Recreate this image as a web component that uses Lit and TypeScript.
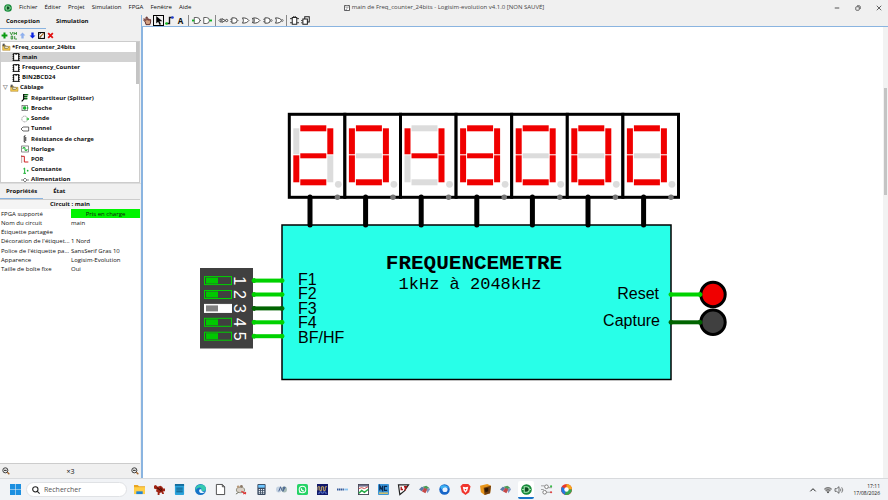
import { LitElement, html, svg, css, nothing } from "lit";
import { customElement, property, state } from "lit/decorators.js";
import { classMap } from "lit/directives/class-map.js";

/* ---------- icons ---------- */

const folder = svg`<path d="M1 3h4l1 2h6v6H1z" fill="#f0c850" stroke="#a57a1c" stroke-width=".7"/><path d="M1 1h3v4H1z" fill="#555"/><path d="M4 5h4l2 1.500L8 8H4z" fill="#fff8d8" stroke="#444" stroke-width=".8"/>`;
const chip = svg`<rect x="2.500" y="1" width="7.500" height="10" fill="#fff" stroke="#000" stroke-width="1.400"/><path d="M.8 2h2M.8 5h2M.8 8h2M.8 11h2M9.700 2h2M9.700 5h2M9.700 8h2M9.700 11h2" stroke="#000" stroke-width="1.400"/><path d="M5 1.700h2.500" stroke="#000" stroke-width="1.300"/>`;
const gateAnd = svg`<path d="M2.500 2.500h3.500a3.500 3.500 0 0 1 0 7H2.500z" fill="#fff" stroke="#222" stroke-width="1.100"/><path d="M0 4.500h2.500M0 7.500h2.500M10 6h1.500" stroke="#444" stroke-width=".8"/>`;
const gateOr = svg`<path d="M2 2.500c4.500 0 6.500 1 8.500 3.500-2 2.500-4 3.500-8.500 3.500 1.500-2.500 1.500-4.500 0-7z" fill="#fff" stroke="#222" stroke-width="1.100"/>`;

const ICONS: Record<string, unknown> = {
  folder,
  chip,
  splitter: svg`<path d="M1 11l3-3V1h6M4 4h5M4 7h5" fill="none" stroke="#000" stroke-width="1.800"/><path d="M5 1h6M5 4h5M5 7h5" stroke="#0a8a1a" stroke-width="1.600"/>`,
  pin: svg`<rect x="1.500" y="2" width="8" height="8" fill="#fff" stroke="#555"/><rect x="3" y="3.500" width="5" height="5" rx="2" fill="#18b030"/><path d="M9 6h2" stroke="#18b030" stroke-width="2"/>`,
  probe: svg`<circle cx="5.500" cy="6" r="4.300" fill="#fff" stroke="#777" stroke-dasharray="2 .8"/><path d="M8 6h4M9.500 4l2 2-2 2" fill="none" stroke="#20c030" stroke-width="1.400"/>`,
  tunnel: svg`<path d="M0 6l3-3h8.500v6H3z" fill="#fff" stroke="#444" stroke-width="1.200"/>`,
  resistor: svg`<path d="M6 0v2l-2 1 4 1.500-4 1.500 4 1.500-4 1.500L6 10v2" fill="none" stroke="#222" stroke-width="1.200"/>`,
  clock: svg`<rect x="1" y="1.500" width="10" height="9" fill="#fff" stroke="#555"/><path d="M3 6V4h3v4h3V6" fill="none" stroke="#18b030" stroke-width="1.500"/>`,
  por: svg`<path d="M0 2h5v8.500h6" fill="none" stroke="#d02020" stroke-width="1.500"/><path d="M1 0v12" stroke="#966" stroke-width=".9"/>`,
  constant: svg`<path d="M3.500 4.500l2-1.500V11M3.500 11h4" fill="none" stroke="#18b030" stroke-width="1.500"/><circle cx="10" cy="7" r="1.300" fill="#18b030"/>`,
  power: svg`<path d="M0 6h3M6 3l3 3-3 3-3-3zM9 6h3" fill="none" stroke="#444"/>`,
  plus: svg`<path d="M6 1v10M1 6h10" stroke="#0a9a10" stroke-width="3.500"/>`,
  vhdl: svg`<path d="M0 0l2.500 5L5 0M7 0v5M11 0v5M7 2.500h4" fill="none" stroke="#2a8a2a" stroke-width="1.500"/><path d="M2 7v5h2.500V7H2M8 7v5h4" fill="none" stroke="#2a8a2a" stroke-width="1.500"/>`,
  up: svg`<path d="M6 1l5 5H8v5H4V6H1z" fill="#8fb0ee"/>`,
  down: svg`<path d="M6 11L1 6h3V1h4v5h3z" fill="#0a22e0"/>`,
  edit: svg`<rect x="1" y="1" width="10" height="10" fill="#fff" stroke="#000" stroke-width="1.800"/><path d="M3 9l7-7" stroke="#a5702a" stroke-width="2"/><path d="M2 4l3-2M3 10l2-2" stroke="#000" stroke-width="1.200"/>`,
  cross: svg`<path d="M2 2l8 8M10 2l-8 8" stroke="#e01010" stroke-width="3"/>`,
  poke: svg`<path d="M4 11.500L3 8 1 5.500l1.500-.8L4 6V1.500h1.700V5h4.500v3l-1 3.500z" fill="#d4a080" stroke="#522" stroke-width="1.200"/><path d="M7.500 3v3M9.500 4v3M0 4h3" stroke="#733"/>`,
  arrow: svg`<path d="M3 0v10l2.500-2.500L7.500 12l1.800-1-2-4h4z" fill="#000"/>`,
  wire: svg`<path d="M2 10h4V2h4" fill="none" stroke="#111" stroke-width="1.800"/><circle cx="2" cy="10" r="1.800" fill="#10c020"/><circle cx="10" cy="2" r="1.800" fill="#2040d0"/>`,
  inPin: svg`<path d="M3 2h3.500a4 4 0 0 1 0 8H3z" fill="#fff" stroke="#333"/><path d="M0 6h3" stroke="#10b020" stroke-width="2.500"/><path d="M10.500 6H12" stroke="#333"/>`,
  outPin: svg`<path d="M1 2h3.500a4 4 0 0 1 0 8H1z" fill="#fff" stroke="#333"/><path d="M8.500 6H12" stroke="#10b020" stroke-width="2.500"/>`,
  notGate: svg`<path d="M0 6l2.500-2.500v5zM4 3.500L8.500 6 4 8.500z" fill="#fff" stroke="#222"/><circle cx="10.200" cy="6" r="1.500" fill="#fff" stroke="#222"/>`,
  andGate: gateAnd,
  orGate: gateOr,
  xorGate: svg`${gateOr}<path d="M.3 2.500c1.500 2.500 1.500 4.500 0 7" fill="none" stroke="#222"/>`,
  nandGate: svg`${gateAnd}<circle cx="11" cy="6" r="1.200" fill="#fff" stroke="#222" stroke-width=".8"/>`,
  norGate: svg`${gateOr}<circle cx="11" cy="6" r="1.200" fill="#fff" stroke="#222" stroke-width=".8"/>`,
  ff: svg`<rect x="3" y="2" width="6" height="9" fill="#fff" stroke="#222" stroke-width="1.300"/><path d="M0 3.500h3M0 9h3M9 3.500h3M9 9h3M5 0v2M7 0v2" stroke="#222" stroke-width="1.200"/>`,
  reg: svg`<rect x="5" y="1" width="6" height="7" fill="#fff" stroke="#222" stroke-width="1.400"/><rect x="2.500" y="4" width="6" height="7" fill="#fff" stroke="#222" stroke-width="1.400"/><path d="M0 6h2M0 9h2" stroke="#222"/>`,
  app: svg`<circle cx="6" cy="6" r="5.800" fill="#178a3a"/><path d="M3.500 3H6a3 3 0 0 1 0 6H3.500z" fill="#0c4d22" stroke="#a8ecb4" stroke-width="1.100"/><path d="M1 6h2.500M9 6h2" stroke="#a8ecb4"/>`,
  floppy: svg`<path d="M1 1h10v10H1z" fill="#fff" stroke="#333" stroke-width="1.500"/><path d="M4 1h4v5H4z" fill="#fff" stroke="#555"/><path d="M3 9h3v2H3z" fill="#556"/>`,
  lens: svg`<circle cx="5" cy="5" r="3.800" fill="#eee" stroke="#333" stroke-width="1.400"/><path d="M3 5h4" stroke="#222" stroke-width="1.500"/><path d="M8 8l3 3" stroke="#a0622a" stroke-width="2"/>`,
  search: svg`<circle cx="5" cy="5" r="4" fill="none" stroke="#222" stroke-width="1.600"/><path d="M8 8l3.500 3.500" stroke="#222" stroke-width="1.600"/>`,
  min: svg`<path d="M1.500 6h9" stroke="#222" stroke-width="1.500"/>`,
  restore: svg`<rect x="1.500" y="3.500" width="7" height="7" rx="1.500" fill="none" stroke="#222" stroke-width="1.300"/><path d="M4 1.500h4.500a2 2 0 0 1 2 2V8" fill="none" stroke="#222" stroke-width="1.300"/>`,
  close: svg`<path d="M1.500 1.500l9 9M10.500 1.500l-9 9" stroke="#222" stroke-width="1.400"/>`,
  caret: svg`<path d="M2 8l4-4 4 4" fill="none" stroke="#222" stroke-width="1.500"/>`,
  wifi: svg`<path d="M0 4.500a8.500 8.500 0 0 1 12 0L6 11z" fill="#aaa"/><path d="M.5 4.500a8 8 0 0 1 11 0M2.500 7a5 5 0 0 1 7 0" fill="none" stroke="#555"/><circle cx="6" cy="9.500" r="1.200" fill="#333"/>`,
  sound: svg`<path d="M0 4h2.500L6 1v10L2.500 8H0z" fill="none" stroke="#333"/><path d="M8 4a3 3 0 0 1 0 4M10 2a6 6 0 0 1 0 8" fill="none" stroke="#444"/>`,
  windows: svg`<path d="M0 0h5.700v5.700H0zM6.300 0H12v5.700H6.300zM0 6.300h5.700V12H0zM6.300 6.300H12V12H6.300z" fill="#1c8fe0"/>`,
  explorer: svg`<path d="M0 1h4l1.500 1.500H12V6H0z" fill="#e9a522"/><path d="M0 3.500h12V11H0z" fill="#ffcf48"/><path d="M2.500 8h7v3h-7z" fill="#2083d5"/>`,
  beast: svg`<path d="M0 2l2-1 2 2 3-1 2 1 1 2h2v3l-2 0 1 3-2 0-1-2-2 1 0 2H4L4 9 2 8l1-2-3-1z" fill="#a02414"/><path d="M3 4l3 2 2 2M7 4l2 3" stroke="#4a0d05" fill="none" stroke-width="1.100"/>`,
  notepad: svg`<rect x="1" y="0" width="10" height="12" rx="1" fill="#2ba3dc"/><path d="M1 0h10v2H1z" fill="#146c9c"/><path d="M2.500 4.500h7M2.500 6.500h7M2.500 8.500h7" stroke="#10587e" stroke-width="1"/>`,
  edge: svg`<circle cx="6" cy="6" r="6" fill="#1673c8"/><path d="M.5 5C2-1 11-1 12 5c0 3-3 3.500-5 2.500 1-2-1-4-3-3.500C2 4.500 1 6 .5 8z" fill="#35c9b0"/><path d="M4.500 7.500c0-2 2-2 2.500-1.500-.5 2 2 3 4 2.500-2 2-6 2-6.500-1z" fill="#e9f7ff"/>`,
  doc: svg`<path d="M1.500.5H8L10.500 3v8.500h-9z" fill="#fff" stroke="#444"/><path d="M8 .5V3h2.500" fill="none" stroke="#444"/>`,
  mouse: svg`<ellipse cx="6" cy="6.500" rx="4.500" ry="3" fill="#d8d0c6" stroke="#776" stroke-width=".8"/><circle cx="3.500" cy="3" r="1.500" fill="#b89a7c"/><circle cx="7" cy="2.500" r="1.500" fill="#8d7a68"/><path d="M7 8l5 3M9 11l3-2" stroke="#d33" stroke-width="1.200"/><path d="M1 11l3-2" stroke="#665"/>`,
  calc: svg`<rect x="1.500" y="0" width="9" height="12" rx="1" fill="#3a4a60"/><rect x="2.500" y="1" width="7" height="3" fill="#6ec6ff"/><path d="M3 6h6M3 8h6M3 10h6" stroke="#e4ebf2" stroke-width="1.200" stroke-dasharray="1.400 .9"/>`,
  lenses: svg`<ellipse cx="3" cy="6" rx="3" ry="3.200" fill="#c4d2e2"/><ellipse cx="9" cy="6" rx="3" ry="3.200" fill="#a8bcb8"/><path d="M3 8l2-5 2 5M8 8V3.500h2L9 6" stroke="#3a5688" fill="none"/>`,
  whatsapp: svg`<rect width="12" height="12" rx="2" fill="#25d366"/><circle cx="6" cy="6" r="3.600" fill="none" stroke="#fff" stroke-width="1.100"/><path d="M2.300 9.700l.8-2.200L4.600 9z" fill="#fff"/><path d="M4.700 4.500c0 2 1 3 2.800 3" stroke="#fff" stroke-width="1.300" fill="none"/>`,
  scope: svg`<rect width="12" height="12" fill="#10186a"/><path d="M1 7V3h2v4h2V3h2v4h2V3h2" stroke="#cfae60" fill="none"/><path d="M1 10h2V8.500h2V10h2V8.500h2V10h2" stroke="#5c7ad0" fill="none"/>`,
  label: svg`<path d="M0 6h8" stroke="#345a9a" stroke-width="2" stroke-dasharray="1.500 .5"/><path d="M8 6h4" stroke="#8ac4f0" stroke-width="2"/>`,
  graph: svg`<rect x=".5" y=".5" width="11" height="11" fill="#fff" stroke="#445"/><path d="M1 2h10" stroke="#557" stroke-width="1.500"/><path d="M1 5l3-1 3 1 4-2" stroke="#c44" fill="none"/><path d="M1 10l3-3 3 2 4-3" stroke="#2a4" stroke-width="1.600" fill="none"/>`,
  nc: svg`<rect width="12" height="12" rx="1" fill="#3a94d8"/><path d="M2 7V2l3 5V2M10 2.500H7V7h3" stroke="#0a2a50" stroke-width="1.300" fill="none"/><path d="M1 10h10" stroke="#e8c860" stroke-width="1.500"/>`,
  lt: svg`<path d="M.5 1h11L7 7.500 2 11.500z" fill="#fff" stroke="#222" stroke-width="1.300"/><path d="M3.500 3v3h2M6.500 3h3.500M8 3v4" stroke="#b01818" stroke-width="1.500" fill="none"/>`,
  cubes: svg`<path d="M0 6l3-3 3 1-3 4z" fill="#5a78a8"/><path d="M4 3l4-1 3 2-3 2z" fill="#4a9a58"/><path d="M8 6l3-2 1 2-3 4z" fill="#8098c0"/><path d="M3 8l3-4 3 2-2 4z" fill="#c44848"/>`,
  thunderbird: svg`<circle cx="6" cy="6" r="5.700" fill="#1765c8"/><circle cx="6.500" cy="6" r="2.800" fill="#e8f2ff"/><path d="M1 3c3-3 9-2 10 2C8 3 5 3 3 6z" fill="#3fb4f4"/>`,
  brave: svg`<path d="M3 0h6l2.500 2.500L10 9l-4 3-4-3L.5 2.500z" fill="#f0342c"/><path d="M3 3l3 .5L9 3 8 7 6 9.500 4 7z" fill="#fff"/><path d="M5 5.500h2L6 7.500z" fill="#f0342c"/>`,
  cube: svg`<path d="M0 2l8-2 4 2-1 8-6 2-4-3z" fill="#e8961c"/><path d="M4 4l8-2-1 8-6 2z" fill="#6e3d10"/><path d="M5 5l4-1v4L6 9z" fill="#2e1804"/>`,
  circuit: svg`<path d="M0 2h4M0 6h3M8 4h4M5 9h6" stroke="#999"/><rect x="4" y="1" width="4" height="4" rx="2" fill="#fff" stroke="#777"/><rect x="2" y="7" width="4" height="4" rx="2" fill="#fff" stroke="#777"/><circle cx="11" cy="2.500" r="1.200" fill="#3b4"/><circle cx="11" cy="9" r="1.200" fill="#d44"/>`,
  photo: svg`<circle cx="6" cy="6" r="6" fill="#e8382c"/><path d="M6 0a6 6 0 0 1 6 6L6 6z" fill="#f6a81c"/><path d="M12 6a6 6 0 0 1-8 5.600L6 6z" fill="#32a852"/><path d="M4 11.600A6 6 0 0 1 1 3l5 3z" fill="#1f7be0"/><circle cx="6" cy="6" r="2.400" fill="#fff"/>`,
};

@customElement("ui-icon")
export class UiIcon extends LitElement {
  @property() name = "";
  static styles = css`
    :host { display: inline-flex; flex: none; width: 8px; height: 8px; }
    svg { width: 100%; height: 100%; overflow: visible; }
  `;
  render() {
    return html`<svg viewBox="0 0 12 12" aria-hidden="true">${ICONS[this.name] ?? nothing}</svg>`;
  }
}

/* ---------- circuit drawing ---------- */

/* segments lit for each digit, order: top, upper right, lower right, bottom, lower left, upper left, middle */
const LIT: Record<string, string> = { "2": "1101101", "0": "1111110", "4": "0110011", "8": "1111111" };
const SEGMENTS = [
  [11, 11, 26, 6],
  [38, 14, 6, 26],
  [38, 41, 6, 27],
  [11, 65, 26, 6],
  [4, 41, 6, 27],
  [4, 14, 6, 26],
  [11, 39, 26, 5],
];

@customElement("circuit-canvas")
export class CircuitCanvas extends LitElement {
  static styles = css`
    :host { display: block; flex: 1; min-width: 0; background: #fff; overflow: hidden; }
    svg { display: block; width: 100%; height: 100%; }
    .sans { font: 16px "Liberation Sans", Arial, sans-serif; fill: #000; }
    .dip { font: 16px "Liberation Sans", Arial, sans-serif; fill: #fff; }
    .end { text-anchor: end; }
    .mid { text-anchor: middle; }
    .title { font: bold 21px "Liberation Mono", "Courier New", monospace; }
    .sub { font: 17px "Liberation Mono", "Courier New", monospace; }
    .frame { fill: #fff; stroke: #000; stroke-width: 3; }
    .on { fill: #f00000; }
    .off { fill: #dcdcdc; }
    .pin { fill: #777; }
    .bus { stroke: #000; stroke-width: 5; stroke-linecap: round; }
    .block { fill: #28ffe8; stroke: #000; stroke-width: 1.5; }
    .hi { stroke: #00d200; fill: #00d200; }
    .lo { stroke: #006400; fill: #006400; }
    .wire { stroke-width: 4; }
    .body { fill: #404040; }
    .sw { fill: #404040; stroke: #00d200; }
    .knob { fill: #00c800; }
    .swoff { fill: #fff; stroke: #fff; }
    .knoboff { fill: #808080; }
    .btn { stroke: #000; stroke-width: 3; }
  `;

  private digit(d: string, i: number) {
    const x = 146.3 + i * 55.6;
    return svg`<g transform="translate(${x} 87.3)">
      <rect class="frame" width="55.6" height="83"></rect>
      ${SEGMENTS.map(([sx, sy, w, h], n) => svg`<rect class=${LIT[d][n] === "1" ? "on" : "off"} x=${sx} y=${sy} width=${w} height=${h}></rect>`)}
      <circle class="off" cx="49" cy="70" r="3.4"></circle>
    </g>`;
  }

  private wire(x1: number, x2: number, y: number, high: boolean) {
    return svg`<g class=${high ? "hi" : "lo"}><path class="wire" d="M${x1} ${y}H${x2}"></path>
      <circle cx=${x1} cy=${y} r="2"></circle><circle cx=${x2} cy=${y} r="2"></circle></g>`;
  }

  render() {
    const digits = [..."2048000"];
    const names = ["F1", "F2", "F3", "F4", "BF/HF"];
    const baselines = [258, 272, 287, 301, 316];
    return html`<svg role="img" aria-label="Circuit main">
      ${digits.map((d, i) => this.digit(d, i))}
      <rect class="block" x="139" y="198" width="389" height="154.500"></rect>
      ${digits.map((_, i) => svg`<circle class="pin" cx=${194.4 + i * 55.6} cy="170.300" r="2.700"></circle>
        <path class="bus" d="M${167 + i * 55.6} 170V198"></path>`)}
      <text class="title mid" x="331" y="242">FREQUENCEMETRE</text>
      <text class="sub mid" x="327" y="262">1kHz à 2048kHz</text>
      <rect class="body" x="57" y="241" width="53" height="80.500"></rect>
      ${names.map((n, i) => {
        const y = 253.6 + i * 13.9;
        const on = i !== 2;
        return svg`<rect class=${on ? "sw" : "swoff"} x="61.500" y=${y - 4} width="27" height="8"></rect>
          <rect class=${on ? "knob" : "knoboff"} x="63" y=${y - 3} width="12" height="6"></rect>
          <text class="dip mid" transform="translate(91 ${y}) rotate(90)">${i + 1}</text>
          ${this.wire(111, 139, y, on)}
          <text class="sans" x="155" y=${baselines[i]}>${n}</text>`;
      })}
      <text class="sans end" x="516" y="272">Reset</text>
      <text class="sans end" x="517" y="299">Capture</text>
      <circle class="btn" cx="570" cy="267.500" r="12.200" fill="#f00000"></circle>
      <circle class="btn" cx="570" cy="295.300" r="12.200" fill="#404040"></circle>
      ${this.wire(528, 557, 267.5, true)}
      ${this.wire(528, 557, 295.3, false)}
    </svg>`;
  }
}

/* ---------- application ---------- */

const MENUS = ["Fichier", "Éditer", "Projet", "Simulation", "FPGA", "Fenêtre", "Aide"];
const TREE: [number, string, string][] = [
  [0, "folder", "*Freq_counter_24bits"],
  [1, "chip", "main"],
  [1, "chip", "Frequency_Counter"],
  [1, "chip", "BIN2BCD24"],
  [1, "folder", "Câblage"],
  [2, "splitter", "Répartiteur (Splitter)"],
  [2, "pin", "Broche"],
  [2, "probe", "Sonde"],
  [2, "tunnel", "Tunnel"],
  [2, "resistor", "Résistance de charge"],
  [2, "clock", "Horloge"],
  [2, "por", "POR"],
  [2, "constant", "Constante"],
  [2, "power", "Alimentation"],
];
const PROPS = [
  ["FPGA supporté", "Pris en charge"],
  ["Nom du circuit", "main"],
  ["Étiquette partagée", ""],
  ["Décoration de l'étiquet...", "1 Nord"],
  ["Police de l'étiquette pa...", "SansSerif Gras 10"],
  ["Apparence", "Logisim-Evolution"],
  ["Taille de boîte fixe", "Oui"],
];
const TOOLS = [
  ["poke", "arrow", "wire", "A"],
  ["inPin", "outPin"],
  ["notGate", "andGate", "orGate", "xorGate", "nandGate", "norGate"],
  ["ff", "reg"],
];
const TASKS = ["explorer", "beast", "notepad", "edge", "doc", "mouse", "calc", "lenses", "whatsapp", "scope", "label", "graph", "nc", "lt", "cubes", "thunderbird", "brave", "cube", "cubes", "app", "circuit", "photo"];

@customElement("app-root")
export class AppRoot extends LitElement {
  @state() private selected = 1;

  static styles = css`
    :host { display: flex; flex-direction: column; height: 100vh; overflow: hidden; background: #f0f0f0; color: #111; font: 6px/9px "Open Sans", "Noto Sans", sans-serif; }
    * { box-sizing: border-box; }
    button { font: inherit; color: inherit; background: none; border: 0; padding: 0; margin: 0; display: flex; align-items: center; justify-content: center; }
    .bar { display: grid; grid-template-columns: 1fr auto 1fr; align-items: center; height: 15px; flex: none; }
    .menus { display: flex; align-items: center; gap: 7px; padding-left: 4px; }
    .title { display: flex; align-items: center; gap: 2px; color: #444; }
    .title ui-icon { width: 6px; height: 6px; }
    .win { display: flex; justify-content: flex-end; gap: 15px; padding-right: 6px; }
    .win ui-icon { width: 6px; height: 6px; }
    .main { display: flex; flex: 1; min-height: 0; }
    .side { width: 142px; flex: none; display: flex; flex-direction: column; border-right: 1px solid #8ab4e0; }
    .tabs { display: flex; flex: none; height: 14px; }
    .tabs.low { height: 16px; padding-top: 1px; border-top: 1px solid #ddd; }
    .tab { padding: 0 6px; font-weight: bold; border-bottom: 1px solid transparent; }
    .tab + .tab { margin-left: 4px; }
    .tab.sel { border-color: #8ab4e0; }
    .edit { display: flex; align-items: center; justify-content: space-between; width: 55px; height: 12px; flex: none; }
    .edit button { width: 8px; height: 10px; }
    .edit ui-icon { width: 7px; height: 7px; }
    .treebox { display: flex; height: 142px; flex: none; align-items: flex-start; background: #fff; border: 1px solid #ccc; margin-right: 1px; overflow: hidden; }
    .tree { flex: 1; display: grid; grid-auto-rows: 1fr; height: 143px; list-style: none; margin: 0; padding: 0; }
    .row { display: flex; align-items: center; gap: 2px; height: 100%; font-weight: bold; width: 100%; justify-content: flex-start; }
    .row.sel { background: #d2d2d2; }
    .lv0 { padding-left: 1px; }
    .lv1 { padding-left: 11px; }
    .lv2 { padding-left: 20px; }
    .open { padding-left: 1px; gap: 2px; }
    .twist { width: 6px; color: #888; }
    .thumb { width: 3px; height: 42px; background: #c4c4c4; flex: none; }
    .props { border-collapse: collapse; table-layout: fixed; width: 140px; height: 65px; background: #fff; }
    .props caption { height: 10px; line-height: 9px; font-weight: bold; background: #f4f4f4; border-top: 1px solid #ccc; }
    .props th, .props td { padding: 0; line-height: 8px; text-align: left; font-weight: normal; white-space: nowrap; }
    .props th { width: 71px; padding-left: 1px; }
    .props td.ok { background: #00f400; text-align: center; }
    .fill { flex: 1; background: #fff; margin-right: 1px; border-bottom: 1px solid #ccc; }
    .zoom { display: flex; flex: none; align-items: center; justify-content: space-between; height: 14px; padding: 0 2px; font-size: 7px; }
    .work { flex: 1; min-width: 0; display: flex; flex-direction: column; }
    .tools { display: flex; align-items: center; height: 11px; flex: none; }
    .group { display: flex; align-items: center; padding: 0 2px; border-right: 1px solid #888; }
    .group:first-child { padding-left: 0; }
    .group:last-child { border: 0; }
    .tool { width: 11px; height: 11px; font-size: 8px; font-weight: bold; }
    .tool ui-icon { width: 9px; height: 9px; }
    .tool.on { border: 1px solid #000; }
    .view { display: flex; flex: 1; min-height: 0; border-top: 1px solid #8ab4e0; border-left: 1px solid #8ab4e0; }
    .scroll { width: 5px; flex: none; background: #f2f2f2; padding: 61px 1px 0; }
    .scroll i { display: block; height: 107px; background: #c4c4c4; }
    .task { display: flex; flex: none; align-items: center; height: 22px; background: #f1f3f6; border-top: 1px solid #d8dadd; padding: 0 8px 0 9px; }
    .task .start { width: 12px; }
    .task .start ui-icon { width: 11px; height: 11px; }
    .find { display: flex; align-items: center; gap: 4px; width: 101px; height: 15px; margin: 0 4px 0 5px; padding: 0 5px; background: #fff; border: 1px solid #e0e2e5; border-radius: 8px; font-size: 7px; }
    .find input { font: inherit; border: 0; padding: 0; width: 100%; min-width: 0; background: none; outline: 0; }
    .find input::placeholder { color: #555; opacity: 1; }
    .apps { display: flex; width: 444px; justify-content: space-between; }
    .app { width: 16px; height: 18px; border-radius: 2px; border-bottom: 2px solid transparent; border-top: 2px solid transparent; }
    .app ui-icon { width: 11px; height: 11px; }
    .app.sel { background: #fff; border-bottom-color: #1874c8; }
    .tray { display: flex; align-items: center; gap: 3px; margin-left: auto; }
    .tray .gap { margin-right: 4px; }
    .clock { font-size: 5px; line-height: 7px; text-align: right; width: 30px; }
  `;

  private tool(name: string) {
    return html`<button class=${classMap({ tool: true, on: name === "arrow" })} aria-label=${name}>
      ${name === "A" ? "A" : html`<ui-icon name=${name}></ui-icon>`}
    </button>`;
  }

  render() {
    return html`
      <header class="bar">
        <nav class="menus"><ui-icon name="app"></ui-icon>${MENUS.map((m) => html`<button>${m}</button>`)}</nav>
        <div class="title"><ui-icon name="floppy"></ui-icon>main de Freq_counter_24bits - Logisim-evolution v4.1.0 [NON SAUVÉ]</div>
        <div class="win">
          ${["min", "restore", "close"].map((n) => html`<button aria-label=${n}><ui-icon name=${n}></ui-icon></button>`)}
        </div>
      </header>
      <div class="main">
        <aside class="side">
          <div class="tabs"><button class="tab sel">Conception</button><button class="tab">Simulation</button></div>
          <div class="edit">
            ${["plus", "vhdl", "up", "down", "edit", "cross"].map((n) => html`<button aria-label=${n}><ui-icon name=${n}></ui-icon></button>`)}
          </div>
          <div class="treebox">
            <ul class="tree">
              ${TREE.map(([lv, icon, text], i) => {
                const open = lv === 1 && icon === "folder";
                return html`<li>
                  <button class=${classMap({ row: true, sel: i === this.selected, [`lv${lv}`]: true, open })} @click=${() => (this.selected = i)}>
                    ${open ? html`<span class="twist">▽</span>` : nothing}<ui-icon name=${icon}></ui-icon>${text}
                  </button>
                </li>`;
              })}
            </ul>
            <div class="thumb"></div>
          </div>
          <div class="tabs low"><button class="tab sel">Propriétés</button><button class="tab">État</button></div>
          <table class="props">
            <caption>Circuit : main</caption>
            ${PROPS.map(([k, v], i) => html`<tr><th scope="row">${k}</th><td class=${i === 0 ? "ok" : ""}>${v}</td></tr>`)}
          </table>
          <div class="fill"></div>
          <div class="zoom"><ui-icon name="lens"></ui-icon><span>×3</span><ui-icon name="lens"></ui-icon></div>
        </aside>
        <section class="work">
          <div class="tools">${TOOLS.map((g) => html`<div class="group">${g.map((t) => this.tool(t))}</div>`)}</div>
          <div class="view"><circuit-canvas></circuit-canvas><div class="scroll"><i></i></div></div>
        </section>
      </div>
      <footer class="task">
        <button class="start" aria-label="Démarrer"><ui-icon name="windows"></ui-icon></button>
        <label class="find"><ui-icon name="search"></ui-icon><input type="search" placeholder="Rechercher" aria-label="Rechercher" /></label>
        <div class="apps">
          ${TASKS.map((t) => html`<button class=${classMap({ app: true, sel: t === "app" })} aria-label=${t}><ui-icon name=${t}></ui-icon></button>`)}
        </div>
        <div class="tray">
          <ui-icon class="gap" name="caret"></ui-icon><ui-icon name="wifi"></ui-icon><ui-icon class="gap" name="sound"></ui-icon>
          <time class="clock">17:11<br />17/08/2026</time>
        </div>
      </footer>
    `;
  }
}
